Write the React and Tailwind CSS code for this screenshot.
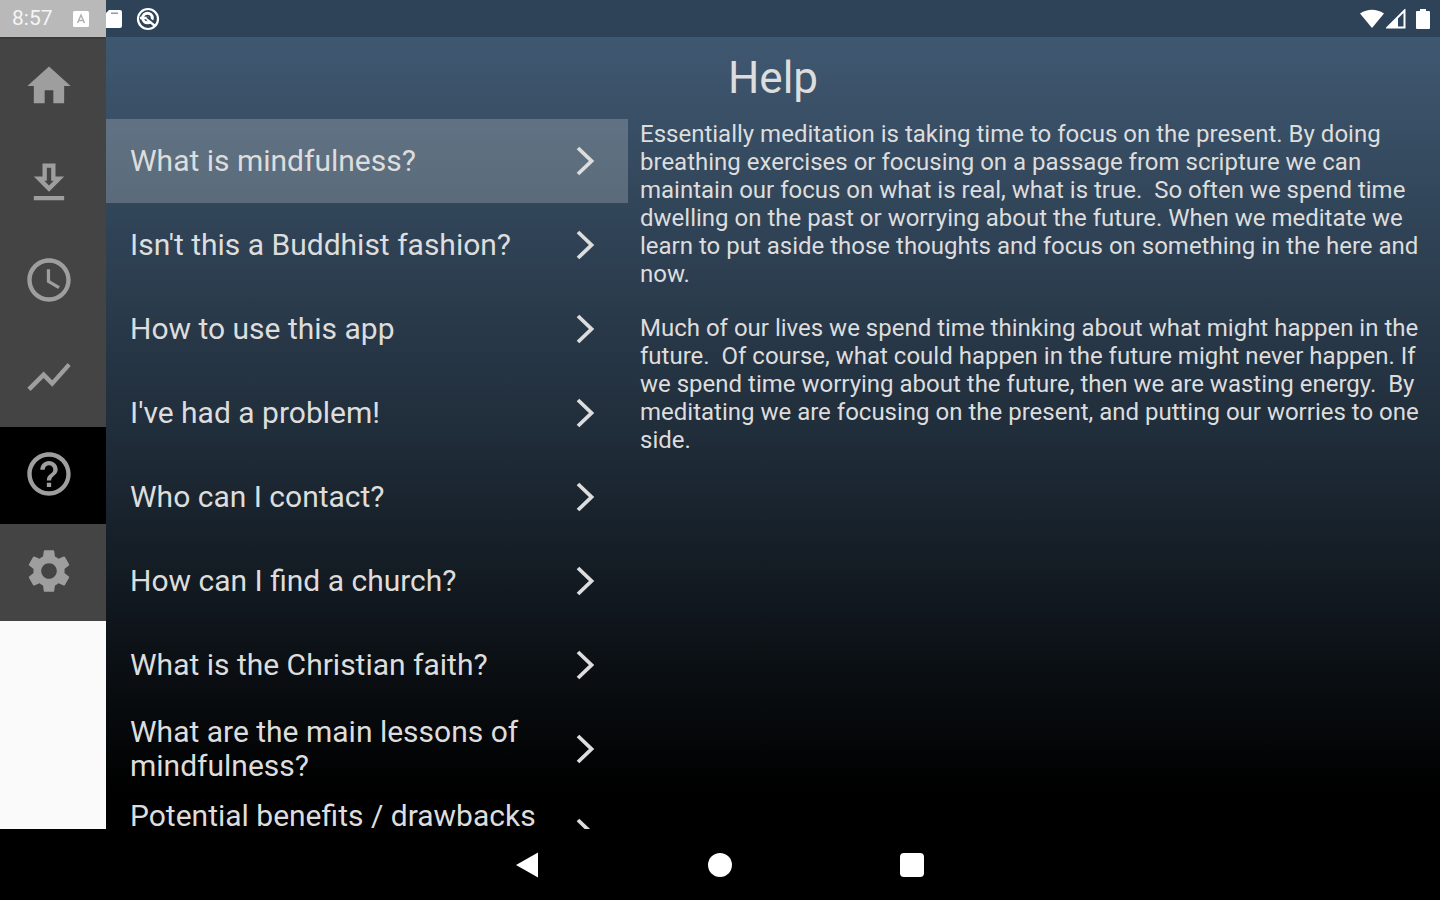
import React, { useState } from 'react';
import { MdAccessTime, MdHelpOutline, MdHome, MdSettings, MdShowChart } from 'react-icons/md';

const DownloadIcon = ({ className }) => (
    <svg viewBox="0 0 24 24" fill="currentColor" className={className}>
        <path d="M19 9h-4V3H9v6H5l7 7 7-7zm-8 2V5h2v6h1.17L12 13.17 9.83 11H11zm-6 7h14v2H5z" />
    </svg>
);

const ChevronIcon = () => (
    <svg viewBox="0 0 20 32" fill="none" stroke="currentColor" strokeWidth="3.8" className="h-8 w-5 shrink-0">
        <path d="M2 3l13.500 13L2 29" />
    </svg>
);

const navItems = [
    { id: 'home', label: 'Home', icon: MdHome },
    { id: 'downloads', label: 'Downloads', icon: DownloadIcon },
    { id: 'history', label: 'History', icon: MdAccessTime },
    { id: 'progress', label: 'Progress', icon: MdShowChart },
    { id: 'help', label: 'Help', icon: MdHelpOutline },
    { id: 'settings', label: 'Settings', icon: MdSettings }
];

const questions = [
    { text: 'What is mindfulness?' },
    { text: "Isn't this a Buddhist fashion?" },
    { text: 'How to use this app' },
    { text: "I've had a problem!" },
    { text: 'Who can I contact?' },
    { text: 'How can I find a church?' },
    { text: 'What is the Christian faith?' },
    { text: 'What are the main lessons of mindfulness?', twoLines: true },
    { text: 'Potential benefits / drawbacks', twoLines: true }
];

const answer = [
    'Essentially meditation is taking time to focus on the present. By doing breathing exercises or focusing on a passage from scripture we can maintain our focus on what is real, what is true.  So often we spend time dwelling on the past or worrying about the future. When we meditate we learn to put aside those thoughts and focus on something in the here and now.',
    'Much of our lives we spend time thinking about what might happen in the future.  Of course, what could happen in the future might never happen. If we spend time worrying about the future, then we are wasting energy.  By meditating we are focusing on the present, and putting our worries to one side.'
];

const Sidebar = ({ active, onChange }) => (
    <aside className="flex w-[106px] shrink-0 flex-col bg-[#fafafa]">
        <div className="flex h-[37px] shrink-0 items-center gap-5 bg-[#b9b9b9] pl-3 text-[#f5f5f5]">
            <span className="text-[21px]">8:57</span>
            <svg viewBox="0 0 16 16" className="h-4 w-4">
                <rect width="16" height="16" rx="1.500" fill="white" />
                <path d="M4.500 12L8 4l3.500 8M6 9.500h4" fill="none" stroke="#b0b0b0" strokeWidth="1.500" />
            </svg>
        </div>
        <nav className="flex flex-col border-t-2 border-[#3a3a3a] bg-[#444444]">
            {navItems.map(({ id, label, icon: Icon }) => (
                <button
                    key={id}
                    aria-label={label}
                    onClick={() => onChange(id)}
                    className={`flex h-[97px] items-center pb-[3px] pl-[23px] text-[#9e9e9e] ${active === id ? 'bg-black' : ''}`}
                >
                    <Icon className="h-[52px] w-[52px]" />
                </button>
            ))}
        </nav>
    </aside>
);

const StatusBar = () => (
    <div className="flex h-[37px] shrink-0 items-center justify-between bg-[#2f4358] pr-[10px] text-white">
        <div className="flex items-center gap-3">
            <svg viewBox="0 0 18 20" fill="currentColor" className="h-5 w-[18px]">
                <path d="M0 4l3-3h11q2 0 2 2v14q0 2-2 2H0z" />
                <path d="M5 3.500h7v1.500H5z" fill="#8d9aa8" />
            </svg>
            <svg viewBox="0 0 24 24" fill="none" stroke="currentColor" className="h-6 w-6">
                <circle cx="12" cy="12" r="10" strokeWidth="2.200" />
                <circle cx="11.500" cy="11" r="4.800" strokeWidth="3" />
                <path d="M4 11h9M11 12l8 7" strokeWidth="2.400" />
                <path d="M11 10l8 6" stroke="#2f4358" strokeWidth="1.800" />
            </svg>
        </div>
        <div className="flex items-center gap-[2px]">
            <svg viewBox="0 0 24 20" fill="currentColor" className="h-5 w-6">
                <path d="M0 4.500Q12-3 24 4.500L12 19z" />
            </svg>
            <svg viewBox="0 0 20 20" className="h-5 w-5">
                <path d="M1.500 18.500L18.500 1.500v17z" fill="none" stroke="white" strokeWidth="2" />
                <path d="M2 18L12 8v10z" fill="white" />
            </svg>
            <svg viewBox="0 0 22 20" fill="currentColor" className="h-5 w-[22px]">
                <path d="M12 0h6v2h3q1 0 1 1v16q0 1-1 1H9q-1 0-1-1V3q0-1 1-1h3z" />
            </svg>
        </div>
    </div>
);

const SystemNav = () => (
    <footer className="flex h-[71px] shrink-0 items-center justify-center gap-[168px] bg-black text-white">
        <button aria-label="Back">
            <svg viewBox="0 0 24 26" fill="currentColor" className="h-[26px] w-6">
                <path d="M0 13L22 0.500v25z" />
            </svg>
        </button>
        <button aria-label="Home screen" className="h-6 w-6 rounded-full bg-white" />
        <button aria-label="Recent apps" className="h-6 w-6 rounded-sm bg-white" />
    </footer>
);

const App = () => {
    const [page, setPage] = useState('help');
    const [selected, setSelected] = useState(0);

    return (
        <div className="flex h-screen flex-col bg-black font-['Roboto',sans-serif]">
            <div className="flex min-h-0 flex-1">
                <Sidebar active={page} onChange={setPage} />

                <div className="flex min-w-0 flex-1 flex-col">
                    <StatusBar />
                    <main className="flex min-h-0 flex-1 flex-col bg-linear-to-b/srgb from-[#3f5871] via-[#202d3a] via-50% to-black to-95% text-[#dddddd]">
                        <h1 className="flex h-[82px] shrink-0 items-center justify-center text-[44px]">Help</h1>

                        <div className="flex min-h-0 flex-1">
                            {/* Questions */}
                            <ul className="w-[522px] shrink-0 overflow-hidden">
                                {questions.map(({ text, twoLines }, index) => (
                                    <li key={text}>
                                        <button
                                            onClick={() => setSelected(index)}
                                            className={`flex h-[84px] w-full items-center justify-between pr-8 pl-6 text-left text-[30px] leading-[34px] ${selected === index ? 'bg-white/20' : ''}`}
                                        >
                                            <span className={`max-w-[410px] ${twoLines ? 'min-h-[68px]' : ''}`}>{text}</span>
                                            <ChevronIcon />
                                        </button>
                                    </li>
                                ))}
                            </ul>

                            {/* Answer */}
                            <article className="flex min-w-0 flex-1 flex-col gap-[26px] pt-px pr-5 pl-3 text-[24px] leading-[28px] whitespace-pre-wrap">
                                {answer.map((paragraph) => (
                                    <p key={paragraph}>{paragraph}</p>
                                ))}
                            </article>
                        </div>
                    </main>
                </div>
            </div>
            <SystemNav />
        </div>
    );
};

export default App;
